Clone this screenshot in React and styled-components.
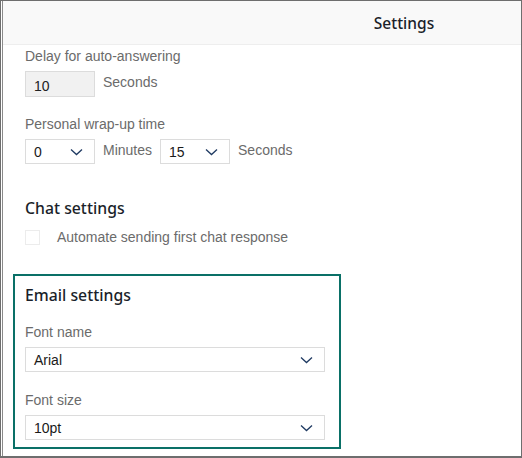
import styled, { createGlobalStyle } from "styled-components";

const Global = createGlobalStyle`
  html, body {
    margin: 0;
    padding: 0;
    background: #fff;
  }
`

const Frame = styled.div`
  width: 522px;
  height: 458px;
  box-sizing: border-box;
  border: 1px solid #6e6e6e;
  border-bottom-width: 2px;
  overflow: hidden;
  background: #fff;
`

const Inner = styled.div`
  height: 100%;
  border-left: 1px solid #8a8a8a;
  margin-left: 1px;
`

const Header = styled.div`
  width: 802px;
  height: 43px;
  display: flex;
  align-items: center;
  justify-content: center;
  background: #f9f9f9;
  border-bottom: 1px solid #eeeeee;
  font-family: "Noto Sans", sans-serif;
  font-weight: 500;
  font-size: 15.5px;
  color: #1b1f2a;
`

const Body = styled.div`
  display: flex;
  flex-direction: column;
  padding: 3px 0 0 22px;
  font-family: "Liberation Sans", Arial, sans-serif;
`

const Label = styled.div`
  font-size: 14px;
  line-height: 16px;
  color: #6b6b6b;
  margin-top: ${p => p.$top || 0}px;
`

const Row = styled.div`
  display: flex;
  align-items: flex-start;
  gap: 8px;
  margin-top: 7px;
`

const Unit = styled.span`
  font-size: 14px;
  line-height: 16px;
  color: #6b6b6b;
  margin-top: 3px;
`

const Input = styled.div`
  width: 70px;
  height: 26px;
  box-sizing: border-box;
  border: 1px solid #dcdcdc;
  background: #f1f1f1;
  font-size: 14px;
  color: #222;
  padding: 6px 0 0 8px;
`

const Select = styled.div`
  width: ${p => p.$w}px;
  height: 25px;
  box-sizing: border-box;
  border: 1px solid #dcdcdc;
  background: #fff;
  display: flex;
  align-items: center;
  justify-content: space-between;
  padding: 0 11px 0 8px;
  font-size: 14px;
  color: #1a1a1a;
`

const Heading = styled.div`
  font-family: "Noto Sans", sans-serif;
  font-weight: 500;
  font-size: 15.8px;
  line-height: 20px;
  color: #1b1f2a;
  margin-top: ${p => p.$top}px;
`

const CheckRow = styled.label`
  display: flex;
  align-items: center;
  gap: 17px;
  margin-top: 11px;
  font-size: 14px;
  color: #6b6b6b;
`

const Check = styled.span`
  width: 15px;
  height: 15px;
  box-sizing: border-box;
  border: 1px solid #ececec;
  background: #fff;
`

const EmailBox = styled.div`
  width: 328px;
  box-sizing: border-box;
  margin: 29px 0 0 -12px;
  border: 2px solid #0a7067;
  padding: 9px 14px 7px 10px;
  display: flex;
  flex-direction: column;
`

const Chevron = () => (
  <svg width="13" height="8" viewBox="0 0 13 8">
    <path d="M1 1.5l5.5 5 5.5-5" fill="none" stroke="#1f3a62" strokeWidth="1.3" />
  </svg>
)

export default function App() {
  return (
    <>
      <Global />
      <Frame>
        <Inner>
          <Header>Settings</Header>
          <Body>
            <Label>Delay for auto-answering</Label>
            <Row>
              <Input>10</Input>
              <Unit>Seconds</Unit>
            </Row>

            <Label $top={19}>Personal wrap-up time</Label>
            <Row>
              <Select $w={70}>0 <Chevron /></Select>
              <Unit>Minutes</Unit>
              <Select $w={70}>15 <Chevron /></Select>
              <Unit>Seconds</Unit>
            </Row>

            <Heading $top={34}>Chat settings</Heading>
            <CheckRow>
              <Check />
              Automate sending first chat response
            </CheckRow>

            <EmailBox>
              <Heading $top={0}>Email settings</Heading>
              <Label $top={19}>Font name</Label>
              <Row>
                <Select $w={300}>Arial <Chevron /></Select>
              </Row>
              <Label $top={20}>Font size</Label>
              <Row>
                <Select $w={300}>10pt <Chevron /></Select>
              </Row>
            </EmailBox>
          </Body>
        </Inner>
      </Frame>
    </>
  )
}
